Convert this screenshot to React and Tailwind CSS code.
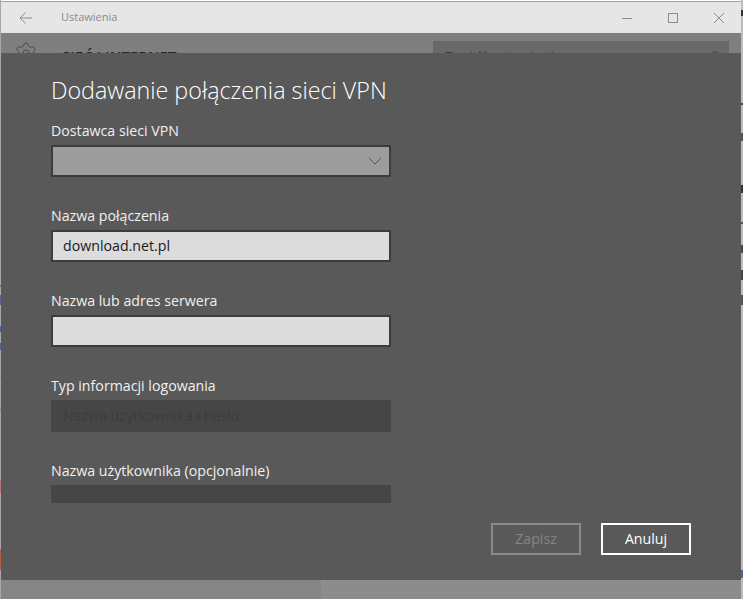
import React from 'react';
import { ChevronDown, Search, Settings } from 'lucide-react';

// bits of the desktop showing past the window edges: [height, colour]
const leftEdge = [
  [285, '#a8a8a8'], [2, '#777777'], [8, '#a8a8a8'], [10, '#55688c'], [21, '#a8a8a8'], [6, '#4a659c'],
  [11, '#a8a8a8'], [7, '#4a659c'], [26, '#a8a8a8'], [1, '#b08850'], [32, '#a8a8a8'], [1, '#7a6a50'],
  [70, '#a8a8a8'], [13, '#b5767a'], [56, '#a8a8a8'], [21, '#b5604c'], [30, '#a8a8a8'],
];
const rightEdge = [
  [10, '#bdbdbd'], [6, '#333333'], [87, '#bdbdbd'], [2, '#444444'], [28, '#bdbdbd'], [8, '#555555'],
  [44, '#bdbdbd'], [8, '#333333'], [29, '#bdbdbd'], [2, '#555555'], [21, '#bdbdbd'], [8, '#444444'],
  [17, '#bdbdbd'], [10, '#444444'], [15, '#bdbdbd'], [10, '#555555'], [265, '#bdbdbd'], [8, '#446699'],
  [21, '#bdbdbd'],
];

const Edge = ({ parts, className }) => (
  <div className={className}>
    {parts.map(([h, color], i) => (
      <div key={i} style={{ height: h, backgroundColor: color }} />
    ))}
  </div>
);

const Label = ({ children }) => (
  <p className="text-[14.2px] leading-[22px] text-[#f0f0f0]">{children}</p>
);

const TextBox = ({ value }) => (
  <div className="mt-[3px] h-8 w-[340px] border-2 border-[#3c3c3c] bg-[#dcdcdc] px-[10px] text-[14.2px] leading-7 text-[#1a1a1a]">
    {value}
  </div>
);

export default function App() {
  return (
    <div className="flex h-[599px] w-[743px] overflow-hidden bg-white font-['Open_Sans','Noto_Sans',sans-serif]">
      <Edge parts={leftEdge} className="w-px shrink-0" />

      <div className="flex w-[740px] shrink-0 flex-col pt-px">
        {/* Title bar */}
        <div className="flex h-[32px] shrink-0 items-center border-t border-[#a0a0a0] bg-[#e6e6e6]">
          <svg className="ml-[18px] h-[12px] w-[13px] text-[#8c8c8c]" viewBox="0 0 13 12" fill="none" stroke="currentColor">
            <path d="M13 6H1M6.500 .5L1 6l5.500 5.500" />
          </svg>
          <span className="ml-[29px] text-[11px] text-[#8a8a8a]">Ustawienia</span>
          <div className="ml-auto flex items-center gap-[36px] pr-[17px] text-[#8c8c8c]">
            <svg className="h-[10px] w-[10px]" viewBox="0 0 10 10" fill="none" stroke="currentColor">
              <path d="M0 5.500H10" />
            </svg>
            <svg className="h-[10px] w-[10px]" viewBox="0 0 10 10" fill="none" stroke="currentColor">
              <rect x=".5" y=".5" width="9" height="9" />
            </svg>
            <svg className="h-[10px] w-[10px]" viewBox="0 0 10 10" fill="none" stroke="currentColor">
              <path d="M0 0L10 10M10 0L0 10" />
            </svg>
          </div>
        </div>

        {/* Dimmed settings page, cut off by the dialog */}
        <div className="flex h-[20px] shrink-0 overflow-hidden bg-[#7f7f7f]">
          <Settings className="ml-[13px] mt-[8px] h-[24px] w-[24px] shrink-0 text-[#4a4a4a]" strokeWidth={1} />
          <span className="ml-[24px] mt-[13px] text-[15px] font-semibold leading-5 text-[#222222]">SIEĆ I INTERNET</span>
          <div className="ml-auto mr-[12px] mt-[8px] flex h-8 w-[296px] shrink-0 justify-between bg-[#696969] pl-3 pr-[6px] pt-[6px] text-[14px] leading-5 text-[#3a3a3a]">
            Znajdź ustawienie
            <Search className="mt-[3px] h-[14px] w-[14px]" strokeWidth={1.5} />
          </div>
        </div>

        {/* Dialog */}
        <div className="flex h-[527px] shrink-0 flex-col bg-[#595959] px-[50px]">
          <h1 className="mt-[21px] text-[23.3px] font-light leading-[32px] text-white">Dodawanie połączenia sieci VPN</h1>

          <div className="mt-[14px]">
            <Label>Dostawca sieci VPN</Label>
            <div className="mt-[3px] flex h-8 w-[340px] items-center justify-end border-2 border-[#3c3c3c] bg-[#9c9c9c] pr-[2px]">
              <ChevronDown className="h-6 w-6 text-[#555555]" strokeWidth={1} />
            </div>
          </div>

          <div className="mt-[28px]">
            <Label>Nazwa połączenia</Label>
            <TextBox value="download.net.pl" />
          </div>

          <div className="mt-[28px]">
            <Label>Nazwa lub adres serwera</Label>
            <TextBox />
          </div>

          <div className="mt-[28px]">
            <Label>Typ informacji logowania</Label>
            <div className="mt-[3px] flex h-8 w-[340px] items-center justify-between bg-[#464646] pl-3 pr-1 text-[14.2px] text-[#3c3c3c]">
              Nazwa użytkownika i hasło
              <ChevronDown className="h-6 w-6 text-[#505050]" strokeWidth={1} />
            </div>
          </div>

          <div className="mt-[28px]">
            <Label>Nazwa użytkownika (opcjonalnie)</Label>
            <div className="mt-[3px] h-[18px] w-[340px] bg-[#464646]" />
          </div>

          <div className="mt-[20px] flex justify-end gap-[20px]">
            <button className="h-8 w-[90px] border-2 border-[#8a8a8a] text-[14.2px] text-[#858585]">Zapisz</button>
            <button className="h-8 w-[90px] border-2 border-white text-[14.2px] text-white">Anuluj</button>
          </div>
        </div>

        {/* Dimmed bottom edge */}
        <div className="flex flex-1">
          <div className="w-[320px] bg-[#858585]" />
          <div className="flex-1 bg-[#8c8c8c]" />
        </div>
      </div>

      <Edge parts={rightEdge} className="w-[2px] shrink-0" />
    </div>
  );
}
